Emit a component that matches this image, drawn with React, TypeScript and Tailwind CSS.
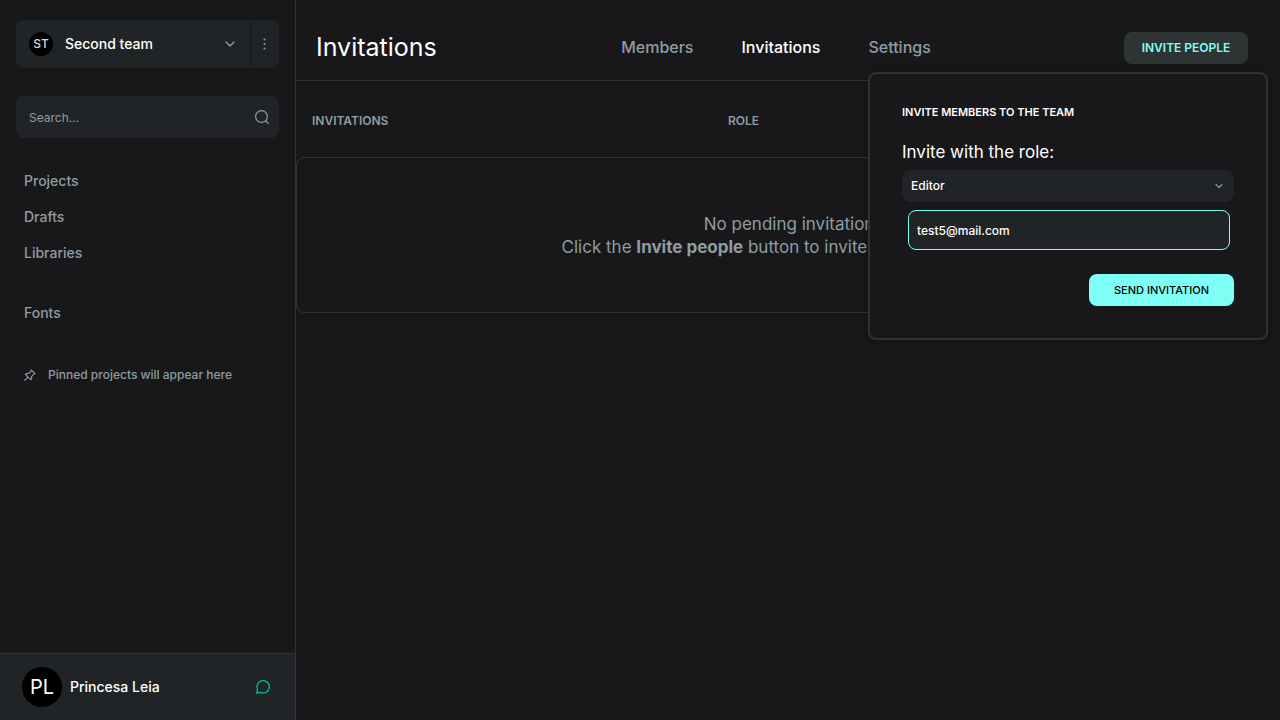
import type { ReactNode } from "react";

function Icon({ children, className }: { children: ReactNode; className?: string }) {
  return (
    <svg
      viewBox="0 0 16 16"
      fill="none"
      stroke="currentColor"
      strokeWidth="1.25"
      strokeLinecap="round"
      strokeLinejoin="round"
      aria-hidden="true"
      className={className}
    >
      {children}
    </svg>
  );
}

const linkGroups = [["Projects", "Drafts", "Libraries"], ["Fonts"]];
const tabs = ["Members", "Invitations", "Settings"];

function Sidebar() {
  return (
    <aside className="flex w-74 shrink-0 flex-col border-r border-[#2e3434]">
      <div className="flex flex-1 flex-col px-4 pt-5">
        <div className="flex h-12 rounded-lg bg-[#212426]">
          <button type="button" className="flex flex-1 items-center gap-3 pr-3 pl-[13px] text-sm font-medium text-white">
            <span className="flex size-6 items-center justify-center rounded-full bg-black text-xs text-[#d8d8d8]">ST</span>
            <span className="flex-1 text-left">Second team</span>
            <Icon className="size-4 text-[#8f9da3]">
              <path d="m4 6 4 4 4-4" />
            </Icon>
          </button>
          <button
            type="button"
            aria-label="Team options"
            className="flex w-[29px] items-center justify-center border-l border-[#18181a] text-[#8f9da3]"
          >
            <Icon className="size-4">
              <path strokeWidth="2" d="M7.5 3.5h.01M7.5 8h.01M7.5 12.5h.01" />
            </Icon>
          </button>
        </div>

        <label className="mt-7 flex h-[42px] items-center rounded-lg bg-[#212426] pr-[9px] pl-[13px] text-[#8f9da3]">
          <input
            type="text"
            aria-label="Search"
            placeholder="Search…"
            className="min-w-0 flex-1 bg-transparent pt-0.5 text-xs outline-none placeholder:text-[#8f9da3]"
          />
          <Icon className="size-4">
            <circle cx="7.5" cy="7.5" r="5.9" />
            <path d="m12 12 2.2 2.2" />
          </Icon>
        </label>

        <nav className="mt-6 flex flex-col gap-6 px-2 text-sm font-medium text-[#8f9da3]">
          {linkGroups.map((group) => (
            <ul key={group[0]}>
              {group.map((label) => (
                <li key={label}>
                  <a href="#" className="flex h-9 items-center pt-px">
                    {label}
                  </a>
                </li>
              ))}
            </ul>
          ))}
        </nav>

        <p className="mt-9 flex items-center gap-3 px-2 pt-px text-xs font-medium text-[#8f9da3]">
          <Icon className="size-3">
            <path strokeWidth="1.5" d="m1 15 4.2-4.2M9.7 1.3l5 5-1.8.6-2.7 2.8-.2 3.5-1.2 1.1-7-7 1.2-1.2 3.5-.2L9.2 3z" />
          </Icon>
          Pinned projects will appear here
        </p>
      </div>

      <div className="flex h-[67px] items-center border-t border-[#2e3434] bg-[#212426] pr-6 pl-[22px]">
        <button type="button" className="flex flex-1 items-center gap-2 text-sm font-medium text-white">
          <span className="flex size-10 items-center justify-center rounded-full bg-black text-xl font-normal">PL</span>
          Princesa Leia
        </button>
        <button type="button" aria-label="Comments" className="text-[#00b99a]">
          <Icon className="size-4">
            <path d="M2.5 10.4A6.2 6.2 0 1 1 5.4 13.4L1.6 14.2z" />
          </Icon>
        </button>
      </div>
    </aside>
  );
}

function InvitePanel() {
  return (
    <form
      onSubmit={(event) => event.preventDefault()}
      className="absolute top-18 right-3 flex w-100 flex-col rounded-lg border-2 border-[#2e3434] bg-[#18181a] px-8 py-8 text-white shadow-[0_0_12px_rgba(0,0,0,0.3)]"
    >
      <h2 className="text-[11px] leading-3 font-semibold uppercase">Invite members to the team</h2>
      <label htmlFor="role" className="mt-6 text-[17px] leading-5">
        Invite with the role:
      </label>
      <div className="mt-2 grid items-center">
        <select
          id="role"
          defaultValue="Editor"
          className="col-start-1 row-start-1 h-8 appearance-none rounded-lg bg-[#212426] px-[9px] text-xs font-medium outline-none"
        >
          <option>Viewer</option>
          <option>Editor</option>
          <option>Admin</option>
        </select>
        <Icon className="pointer-events-none col-start-1 row-start-1 mr-[9px] size-3 justify-self-end text-[#8f9da3]">
          <path strokeWidth="1.5" d="m4 6 4 4 4-4" />
        </Icon>
      </div>
      <input
        type="email"
        aria-label="Emails"
        defaultValue="test5@mail.com"
        className="mt-2 mr-1 ml-1.5 h-10 rounded-lg border border-[#7efff5] bg-[#212426] px-2 text-xs font-medium outline-none"
      />
      <button
        type="submit"
        className="mt-6 h-8 w-[145px] self-end rounded-lg bg-[#7efff5] text-[11px] font-medium text-black uppercase"
      >
        Send invitation
      </button>
    </form>
  );
}

export default function App() {
  return (
    <div className="relative flex min-h-screen overflow-hidden bg-[#18181a] font-[Inter,'Liberation_Sans',sans-serif]">
      <Sidebar />
      <main className="min-w-0 flex-1 pr-4">
        <header className="grid h-[81px] grid-cols-[1fr_auto_1fr] items-center border-b border-[#2e3434] pt-4 pr-4 pl-2">
          <h1 className="pl-3 text-[25px] text-white">Invitations</h1>
          <nav className="flex gap-12 pb-0.5 font-medium text-[#8f9da3]">
            {tabs.map((tab) => (
              <a key={tab} href="#" className={tab === "Invitations" ? "text-white" : ""}>
                {tab}
              </a>
            ))}
          </nav>
          <button
            type="button"
            className="h-8 w-31 justify-self-end rounded-lg bg-[#2e3434] text-xs font-semibold text-[#7efff5] uppercase"
          >
            Invite people
          </button>
        </header>
        <div className="grid h-19 grid-cols-[416px_1fr] items-center px-4 pt-1 text-xs font-semibold text-[#8f9da3] uppercase">
          <span>Invitations</span>
          <span>Role</span>
        </div>
        <section className="flex h-39 flex-col items-center justify-center rounded-lg border border-[#2e3434] pt-0.5 pl-8 text-[17px] leading-[23px] text-[#8f9da3]">
          <p>No pending invitations.</p>
          <p>
            Click the <strong className="font-bold">Invite people</strong> button to invite people to this team.
          </p>
        </section>
      </main>
      <InvitePanel />
    </div>
  );
}
